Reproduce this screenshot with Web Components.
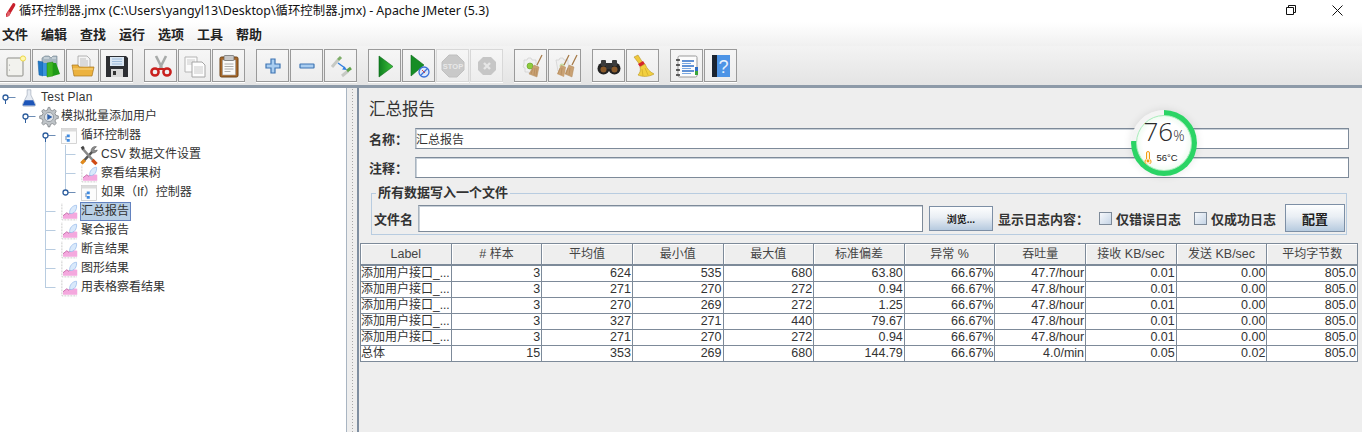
<!DOCTYPE html>
<html>
<head>
<meta charset="utf-8">
<title>JMeter</title>
<style>
  html, body { margin: 0; padding: 0; background: #eee; overflow: hidden; }
  body { width: 1362px; height: 432px; font-family: "Liberation Sans", "Noto Sans CJK SC", sans-serif; }
</style>
</head>
<body>
<jm-app></jm-app>

<script>
const CJK = '"Liberation Sans", "Noto Sans CJK SC", sans-serif';

///////////////////
// Icons, all on a 24 box
const ICONS = {
  new: `<rect x="4" y="4" width="16" height="18" rx="1" fill="#f2f2ee" stroke="#8d8d88"/><circle cx="6.500" cy="11" r=".6" fill="#999"/><circle cx="6.500" cy="16" r=".6" fill="#999"/><circle cx="20" cy="4.500" r="2.600" fill="#fff7b0" stroke="#ecd84a"/>`,
  templates: `<path d="M5 8V4l3-2h4l2 2 2-2h4v13H5z" fill="#a9b8c2" stroke="#6f828d" stroke-width=".6"/><path d="M7 4h5M15 4h4" stroke="#dfe6ea"/><path d="M1 7l5 1v14l-4-1z" fill="#1f78c8" stroke="#135a9c" stroke-width=".5"/><path d="M6 9h4v13H6z" fill="#3b93dc"/><path d="M10 9l6-1v14l-6 1z" fill="#3cb521" stroke="#23860f" stroke-width=".5"/><path d="M16 9h3l4 11-7 2z" fill="#1f9a18"/>`,
  open: `<path d="M7 13V2h9l3 3v9z" fill="#f5f5f5" stroke="#999" stroke-width=".7"/><path d="M9 5h6M9 7h8M9 9h8M9 11h8" stroke="#aaa" stroke-width=".7"/><path d="M1 11h6l1 2h15l-2 9H3z" fill="#ecb23e" stroke="#a9761c" stroke-width=".7"/><path d="M2 15h20" stroke="#f9d885"/>`,
  save: `<path d="M1 2h20l2 2v19H1z" fill="#2d2f33"/><rect x="5" y="3" width="14" height="9" fill="#dbe7f3"/><path d="M7 5h10M7 7.500h10M7 10h10" stroke="#8eb0d3" stroke-width=".8"/><rect x="6" y="15" width="12" height="8" fill="#d8d8d8"/><rect x="8" y="17" width="3" height="4" fill="#333"/>`,
  cut: `<path d="M7 2l6 12M17 2l-6 12" stroke="#a7aaa9" stroke-width="2.600" fill="none"/><circle cx="6" cy="18" r="3.600" fill="none" stroke="#c9201e" stroke-width="2.500"/><circle cx="18" cy="18" r="3.600" fill="none" stroke="#c9201e" stroke-width="2.500"/><path d="M9 15h6" stroke="#c9201e" stroke-width="2"/>`,
  copy: `<path d="M2 3h12v15H2z" fill="#fbfbfb" stroke="#b5b5b5"/><path d="M4 6h8M4 8h8M4 10h8" stroke="#ccc"/><path d="M9 8h10l3 3v12H9z" fill="#fdfdfd" stroke="#a5a5a5"/><path d="M11 13h9M11 15h9M11 17h9M11 19h9" stroke="#bdbdbd" stroke-width=".8"/>`,
  paste: `<rect x="3" y="3" width="18" height="20" rx="1.500" fill="#a8682a" stroke="#6d4317"/><rect x="5.500" y="6" width="13" height="15" fill="#fafafa" stroke="#999" stroke-width=".6"/><rect x="7" y="1.500" width="10" height="5" rx="1" fill="#c7c7c7" stroke="#666" stroke-width=".7"/><path d="M7.500 10h9M7.500 12.500h9M7.500 15h9M7.500 17.500h6" stroke="#999" stroke-width=".8"/>`,
  plus: `<path d="M10 5h4v5h5v4h-5v5h-4v-5H5v-4h5z" fill="#a9cdf0" stroke="#3e75b3" stroke-width="1.200"/>`,
  minus: `<rect x="5" y="10" width="14" height="4" rx=".5" fill="#a9cdf0" stroke="#3e75b3" stroke-width="1.200"/>`,
  toggle: `<path d="M3 13L9 6" stroke="#c6c9c4" stroke-width="3"/><path d="M9 6l3-3" stroke="#7fae6a" stroke-width="3"/><path d="M13 22l6-5" stroke="#c6c9c4" stroke-width="3"/><path d="M18 17l4-3" stroke="#5fa349" stroke-width="3"/><path d="M9 9l7 5" stroke="#2f7fe0" stroke-width="1.400"/><path d="M18 16l-5-.5 2.500-3z" fill="#2f7fe0"/>`,
  play: `<defs><linearGradient id="pg" x1="0" y1="0" x2="1" y2="0"><stop offset="0" stop-color="#0f7f1f"/><stop offset="1" stop-color="#3cc13c"/></linearGradient></defs><path d="M6 2l14 10.500L6 23z" fill="url(#pg)" stroke="#0c6a18" stroke-width=".6"/>`,
  playnt: `<path d="M4 1l13 10L4 22z" fill="#158d25" stroke="#0c6a18" stroke-width=".6"/><circle cx="17" cy="18" r="5" fill="#dbe8fb" stroke="#3a6fd8" stroke-width="1.300"/><path d="M14 21l6-6" stroke="#3a6fd8" stroke-width="1.300"/><path d="M15 16l3 3" stroke="#d33" stroke-width=".9"/>`,
  stop: `<path d="M8 1h8l7 7v8l-7 7H8l-7-7V8z" fill="#c9c9c9" stroke="#c0c0c0"/><text x="12" y="15" font-size="7.500" font-weight="700" text-anchor="middle" fill="#e8e8e8" font-family="Liberation Sans">STOP</text>`,
  shutdown: `<path d="M8 3h8l5 5v8l-5 5H8l-5-5V8z" fill="#c6c6c6"/><path d="M9 9l6 6M15 9l-6 6" stroke="#e6e6e6" stroke-width="2.400"/>`,
  clear: `<path d="M5 6h3l1-2h3l1 2h4v4l2 2-2 2v3h-3l-2 2-3-1H6v-4l-2-1 1-3z" fill="#f0f0f0" stroke="#cfcfcf" stroke-width=".7"/><circle cx="11" cy="12" r="3" fill="#8fcd3c" stroke="#5d9a22" stroke-width=".6"/><path d="M23 1l-5 10" stroke="#a67b4a" stroke-width="1.300"/><path d="M15 11l5 2-2 10-8-3z" fill="#c9a173" stroke="#a98150" stroke-width=".4"/><path d="M14 14l-2 6M16 14l-1 7M18 14l-1 8" stroke="#a98150" stroke-width=".5"/>`,
  clearall: `<path d="M3 6h3l1-2h3l1 2h4v4l1 2-1 2v3H5z" fill="#f0f0f0" stroke="#cfcfcf" stroke-width=".7"/><circle cx="9" cy="12" r="2.500" fill="#c9dfa6"/><path d="M16 1l-5 10M24 1l-5 10" stroke="#a67b4a" stroke-width="1.300"/><path d="M8 11l5 2-2 10-7-3z" fill="#c9a173"/><path d="M16 11l5 2-2 10-7-3z" fill="#c9a173" stroke="#a98150" stroke-width=".4"/><path d="M7 14l-2 6M9 14l-1 7M15 14l-2 6M17 14l-1 7" stroke="#a98150" stroke-width=".5"/>`,
  search: `<circle cx="6.500" cy="14.500" r="6" fill="#222"/><circle cx="17.500" cy="14.500" r="6" fill="#222"/><rect x="9" y="9" width="6" height="6" fill="#333"/><rect x="4" y="6" width="5" height="6" rx="1" fill="#3c3c3c"/><rect x="15" y="6" width="5" height="6" rx="1" fill="#3c3c3c"/><circle cx="6.500" cy="15.500" r="3" fill="#8a5a2a"/><circle cx="17.500" cy="15.500" r="3" fill="#8a5a2a"/>`,
  broom: `<path d="M3 3l4-2 5 8-3 2z" fill="#f0c83c" stroke="#a8861c" stroke-width=".5"/><path d="M7 10l5-3 2 3-5 3z" fill="#d4262a"/><path d="M9 13l5-3c2 5 5 8 9 10-5 3-12 3-16 1 2-2 3-5 2-8z" fill="#f2d03f" stroke="#b8951f" stroke-width=".6"/><path d="M11 15l1 7M14 14l3 7" stroke="#c7a324" stroke-width=".6"/>`,
  list: `<rect x="3" y="2" width="19" height="21" rx="1.500" fill="#fcfcfc" stroke="#9a9a9a"/><path d="M7 7h12M7 12h12M7 17h12" stroke="#2e6fc8" stroke-width="1.300"/><path d="M7 9.500h9M7 14.500h9M7 19.500h9" stroke="#6b9ede" stroke-width=".9"/><path d="M1 6h4M1 11h4M1 16h4M1 21h4" stroke="#333" stroke-width="1.400"/><rect x="20" y="13" width="3" height="4" fill="#2e6fc8"/><rect x="20" y="17" width="3" height="4" fill="#3aa63a"/>`,
  help: `<path d="M3 1h18v22H3z" fill="#4d94e6"/><rect x="3" y="1" width="5" height="22" fill="#1b2430"/><text x="14.500" y="19" font-size="18" text-anchor="middle" fill="#e9f2fd" font-family="Liberation Sans">?</text>`,
  flask: `<path d="M9.500 1h5v7l6 12c.5 1.500-.5 3-2 3H5.500c-1.500 0-2.500-1.500-2-3l6-12z" fill="#e6ebf2" stroke="#8c98a8" stroke-width=".7"/><path d="M6.500 15h11l3 7H3.500z" fill="#1d55b8"/>`,
  gear: `<path d="M11 .5h2l.8 3 2.300 1 2.700-1.600 2 2-1.600 2.700 1 2.300 3 .8v3l-3 .8-1 2.300 1.600 2.700-2 2-2.700-1.600-2.300 1-.8 3h-2l-.8-3-2.300-1-2.700 1.600-2-2 1.600-2.700-1-2.300-3-.8v-3l3-.8 1-2.300-1.600-2.700 2-2 2.700 1.600 2.300-1z" fill="#bfc4c8" stroke="#6f7479" stroke-width=".8"/><circle cx="12" cy="12" r="5.500" fill="#dfe3e8" stroke="#7d858c" stroke-width=".8"/><path d="M10 8.500l6 3.500-6 3.500z" fill="#2a5da8"/>`,
  logic: `<rect x="2" y="2" width="20" height="20" fill="#fcfcfc" stroke="#c8c8c8"/><rect x="2" y="2" width="20" height="4" fill="#dcdcdc"/><path d="M9 10h4v3.500H9zM9 16h4v3.500H9z" fill="#3f8ae0"/><path d="M8 12v5.500" stroke="#2f5f9e"/>`,
  wrench: `<path d="M3 22l13-14" stroke="#555" stroke-width="3"/><path d="M3 22l4-4" stroke="#e28a1c" stroke-width="4"/><path d="M15 9a5 5 0 0 1 6-7l-3 3 1 2 3-1a5 5 0 0 1-7 3z" fill="#8e8e8e" stroke="#444" stroke-width=".6"/><path d="M4 4l15 17" stroke="#8a8a8a" stroke-width="3"/><path d="M2 3l3-2 2 3-3 2z" fill="#444"/><path d="M16 18l5 5" stroke="#d04a14" stroke-width="4"/>`,
  graph: `<path d="M2.500 1v21.500H23" fill="none" stroke="#b4b4b4" stroke-dasharray="1 1" stroke-width="1.200"/><path d="M4 21v-4l5-4 3 2 3-3 8 1v8z" fill="#f4a8de"/><path d="M4 17l5-4 3 2 3-3" fill="none" stroke="#b0478f" stroke-width=".9"/><path d="M13 14C12 8 17 3 22 3c1 6-3 12-9 11z" fill="#d9e9fb" stroke="#8fb5e8" stroke-width=".9"/>`
};

function icon(name, size) {
  return `<svg width="${size}" height="${size}" viewBox="0 0 24 24" style="display:block;flex:none;overflow:visible">${ICONS[name]}</svg>`;
}

///////////////////
// Title bar
class JmTitlebar extends HTMLElement {
  constructor() {
    super();
    this.attachShadow({mode: 'open'});
    this.shadowRoot.innerHTML = `
      <style>
        :host { display: flex; align-items: center; height: 22px; padding-bottom: 2px; box-sizing: border-box; background: #fff; color: #111;
                font: 12.400px "Noto Sans", "Noto Sans CJK SC", sans-serif; white-space: nowrap; }
        svg { flex: none; }
        .name { margin-left: 1px; flex: 1; }
        .ctl { display: flex; align-items: center; justify-content: center; width: 46px; height: 20px; }
      </style>
      <svg width="14" height="16" viewBox="0 0 14 16" style="margin-left:4px"><path d="M9 1c2 0 3 1 2 3L5 14l-3 1 0-3z" fill="#c8202c"/><path d="M4 9l3 2-2 3-3 1z" fill="#e0606a"/></svg>
      <span class="name"><slot></slot></span>
      <span class="ctl"><svg width="10" height="10" viewBox="0 0 10 10"><path d="M.5 2.500h7v7h-7z M2.500 2.500v-2h7v7h-2" fill="none" stroke="#111"/></svg></span>
      <span class="ctl"><svg width="11" height="11" viewBox="0 0 11 11"><path d="M.5.500l10 10M10.500.500l-10 10" stroke="#111" fill="none"/></svg></span>
      <span style="width:2px"></span>`;
  }
}
customElements.define('jm-titlebar', JmTitlebar);

///////////////////
// Menu bar
class JmMenubar extends HTMLElement {
  constructor() {
    super();
    this.attachShadow({mode: 'open'});
    this.shadowRoot.innerHTML = `
      <style>
        :host { display: flex; align-items: center; gap: 13px; height: 24px; padding: 0 0 2px 2px; box-sizing: border-box;
                background: linear-gradient(#fff, #f0f0f0); font: 700 13px ${CJK}; color: #222; }
      </style>
      ${['文件','编辑','查找','运行','选项','工具','帮助'].map(t => `<span>${t}</span>`).join('')}`;
  }
}
customElements.define('jm-menubar', JmMenubar);

///////////////////
// Toolbar
class JmToolbar extends HTMLElement {
  constructor() {
    super();
    this.attachShadow({mode: 'open'});
    const groups = [
      ['new','templates','open','save'],
      ['cut','copy','paste'],
      ['plus','minus','toggle'],
      ['play','playnt','stop','shutdown'],
      ['clear','clearall'],
      ['search','broom'],
      ['list','help']
    ];
    const off = ['stop','shutdown'];
    this.shadowRoot.innerHTML = `
      <style>
        :host { display: flex; gap: 11px; height: 39px; padding: 3px 0 0 0; box-sizing: border-box;
                background: linear-gradient(#f3f3f3, #e4e4e4); overflow: hidden; }
        .group { display: flex; gap: 1px; }
        .group:first-of-type { margin-left: -2px; }
        .btn { width: 31px; height: 31px; border: 1px solid #9a9a9a; box-shadow: 0 1px 0 #fff;
               background: linear-gradient(#f6f6f6, #ededed);
               display: flex; align-items: center; justify-content: center; }
        .btn.off { border-color: #d8d8d8; }
      </style>
      ${groups.map(g => `<div class="group">${g.map(n =>
        `<div class="btn ${off.includes(n) ? 'off' : ''}">${icon(n, 24)}</div>`).join('')}</div>`).join('')}`;
  }
}
customElements.define('jm-toolbar', JmToolbar);

///////////////////
// One row of the tree; the gutter draws its own connector lines
class JmTreeRow extends HTMLElement {
  constructor() {
    super();
    this.attachShadow({mode: 'open'});
    const level = +this.getAttribute('level');
    const w = 20 * level + 20;
    const verts = (this.getAttribute('verts') || '').split(',').filter(Boolean).map(v => v.split(':'));
    const hx = 20 * level + 5.5;
    let g = verts.map(([x, a, b]) => `<path d="M${x} ${a}V${b}" stroke="#b8cce0"/>`).join('');
    if (this.hasAttribute('handle')) {
      g += `<path d="M${hx} 9.500H${hx + 10}" stroke="#6d8db5"/><circle cx="${hx}" cy="9.500" r="2.500" fill="#fff" stroke="#2f5f9e" stroke-width="1.300"/>`;
      if (!this.hasAttribute('closed')) g += `<path d="M${hx} 12v4" stroke="#2f5f9e"/>`;
    } else {
      g += `<path d="M${hx} 9.500H${hx + 10}" stroke="#b8cce0"/>`;
    }
    const ico = this.getAttribute('icon');
    const size = ico === 'gear' || ico === 'wrench' ? 20 : 18;
    this.shadowRoot.innerHTML = `
      <style>
        :host { display: flex; align-items: center; height: 19px; font: 12px ${CJK}; color: #333; white-space: nowrap; }
        svg.gut { flex: none; display: block; }
        .ico { width: 18px; height: 18px; flex: none; display: flex; align-items: center; justify-content: center; }
        .label { padding: 0 1px 0 0; line-height: 17px; border: 1px solid transparent; margin-left: 2px; }
        :host([selected]) .label { background: #b8cfe5; border-color: #6382bf; }
      </style>
      <svg class="gut" width="${w}" height="19" viewBox="0 0 ${w} 19">${g}</svg>
      <span class="ico">${icon(ico, size)}</span>
      <span class="label"><slot></slot></span>`;
  }
}
customElements.define('jm-tree-row', JmTreeRow);

///////////////////
// Left tree panel
class JmTree extends HTMLElement {
  constructor() {
    super();
    this.attachShadow({mode: 'open'});
    this.shadowRoot.innerHTML = `
      <style>
        :host { display: block; width: 346px; flex: none; background: #fff; box-sizing: border-box; }
      </style>
      <slot></slot>`;
  }
}
customElements.define('jm-tree', JmTree);

///////////////////
// Dotted splitter between the tree and the report
class JmSplitter extends HTMLElement {
  constructor() {
    super();
    this.attachShadow({mode: 'open'});
    this.shadowRoot.innerHTML = `
      <style>
        :host { display: flex; width: 13px; flex: none; background: #eee; box-sizing: border-box;
                border-left: 1px solid #a9b5c2; border-right: 2px solid #7f8ea0; justify-content: center; }
        i { width: 3px; background-image: radial-gradient(#a8a8a8 .8px, transparent 1px);
            background-size: 3px 3px; }
      </style>
      <i></i>`;
  }
}
customElements.define('jm-splitter', JmSplitter);

///////////////////
// Text field
class JmField extends HTMLElement {
  constructor() {
    super();
    this.attachShadow({mode: 'open'});
    this.shadowRoot.innerHTML = `
      <style>
        :host { display: block; flex: 1; align-self: stretch; box-sizing: border-box; background: #fff;
                border: 1px solid #7d8a99; border-left-color: #a9b4bf; box-shadow: inset 1px 1px 0 #c8d0d8;
                font: 400 12px ${CJK}; color: #333; line-height: 22px; white-space: nowrap; }
      </style>
      <slot></slot>`;
  }
}
customElements.define('jm-field', JmField);

///////////////////
// Gradient button
class JmButton extends HTMLElement {
  constructor() {
    super();
    this.attachShadow({mode: 'open'});
    this.shadowRoot.innerHTML = `
      <style>
        :host { display: flex; align-items: center; justify-content: center; flex: none; box-sizing: border-box;
                border: 1px solid #7d8fa5; background: linear-gradient(#fdfefe, #e9eef4 45%, #b6cadf);
                font: 700 13px ${CJK}; color: #222; }
      </style>
      <slot></slot>`;
  }
}
customElements.define('jm-button', JmButton);

///////////////////
// Checkbox with label
class JmCheck extends HTMLElement {
  constructor() {
    super();
    this.attachShadow({mode: 'open'});
    this.shadowRoot.innerHTML = `
      <style>
        :host { display: flex; align-items: center; gap: 4px; font: 700 13px ${CJK}; color: #333; white-space: nowrap; }
        i { width: 11px; height: 11px; border: 1px solid #7d8a99; background: linear-gradient(135deg, #f6f8fb, #c6d5e6); }
      </style>
      <i></i><slot></slot>`;
  }
}
customElements.define('jm-check', JmCheck);

///////////////////
// Titled group box
class JmGroup extends HTMLElement {
  constructor() {
    super();
    this.attachShadow({mode: 'open'});
    this.shadowRoot.innerHTML = `
      <style>
        :host { display: block; margin: 8px 15px 0 12px; }
        fieldset { margin: 0; padding: 0 1px 2px 2px; height: 49px; box-sizing: border-box; border: 1px solid #b8cce0; }
        legend { padding: 0 2px; margin-left: 2px; font: 700 13px/14px ${CJK}; color: #333; }
        .row { display: flex; align-items: center; height: 28px; margin-top: 4px; }
      </style>
      <fieldset><legend>${this.getAttribute('title')}</legend><div class="row"><slot></slot></div></fieldset>`;
  }
}
customElements.define('jm-group', JmGroup);

///////////////////
// Results table
class JmTable extends HTMLElement {
  constructor() {
    super();
    this.attachShadow({mode: 'open'});
    const head = ['Label','# 样本','平均值','最小值','最大值','标准偏差','异常 %','吞吐量','接收 KB/sec','发送 KB/sec','平均字节数'];
    const L = '添加用户接口_...';
    const rows = [
      [L,'3','624','535','680','63.80','66.67%','47.7/hour','0.01','0.00','805.0'],
      [L,'3','271','270','272','0.94','66.67%','47.8/hour','0.01','0.00','805.0'],
      [L,'3','270','269','272','1.25','66.67%','47.8/hour','0.01','0.00','805.0'],
      [L,'3','327','271','440','79.67','66.67%','47.8/hour','0.01','0.00','805.0'],
      [L,'3','271','270','272','0.94','66.67%','47.8/hour','0.01','0.00','805.0'],
      ['总体','15','353','269','680','144.79','66.67%','4.0/min','0.05','0.02','805.0']
    ];
    // chinese runs are a touch smaller than the latin around them
    const zh = t => t.replace(/[\u4e00-\u9fff]+/g, m => `<span class="z">${m}</span>`);
    this.shadowRoot.innerHTML = `
      <style>
        :host { display: grid; grid-template-columns: repeat(11, 1fr); width: 998px; margin: 8px 0 0 1px; box-sizing: border-box;
                border: solid #7d8a99; border-width: 1px 0 0 1px; font: 400 12.500px ${CJK}; color: #333; }
        div { box-sizing: border-box; border: solid #7d8a99; border-width: 0 1px 1px 0; white-space: nowrap; overflow: hidden; }
        .z { font-size: 12px; }
        .h { height: 22px; line-height: 20px; text-align: center; background: #eee; color: #444; border-width: 0 1px 2px 0; box-shadow: inset 1px 1px 0 #fff; }
        .c { height: 16px; line-height: 15px; text-align: right; padding-right: 1px; background: #fff; }
        .c.l { text-align: left; padding: 0; font-size: 12px; }
      </style>
      ${head.map(t => `<div class="h">${zh(t)}</div>`).join('')}
      ${rows.map(r => r.map((t, i) => `<div class="c ${i ? '' : 'l'}">${zh(t)}</div>`).join('')).join('')}`;
  }
}
customElements.define('jm-table', JmTable);

///////////////////
// CPU gauge floating over the window
class JmGauge extends HTMLElement {
  constructor() {
    super();
    this.attachShadow({mode: 'open'});
    this.shadowRoot.innerHTML = `
      <style>
        :host { position: absolute; left: 1131px; top: 110px; width: 66px; height: 66px; border-radius: 50%;
                background: conic-gradient(#2bd465 0 76%, #f4f4f4 76% 100%); display: flex; align-items: center; justify-content: center;
                box-shadow: 0 0 8px rgba(0,0,0,.1); }
        .in { width: 56px; height: 56px; border-radius: 50%; background: radial-gradient(#fff 55%, #d6f5dc); box-sizing: border-box;
              border: 1px solid #a8edbb;
              display: flex; flex-direction: column; align-items: center; font-family: "Open Sans", sans-serif; color: #2a2a2a; }
        .num { font-size: 26px; line-height: 29px; margin-top: 1px; font-weight: 300; }
        .num small { font-size: 14px; }
        .t { display: flex; align-items: center; gap: 4px; padding-right: 6px; font: 9.500px/11px "Liberation Sans", sans-serif; color: #222; margin-top: 1px; }
      </style>
      <div class="in">
        <div class="num">76<small>%</small></div>
        <div class="t"><svg width="8" height="13" viewBox="0 0 8 13"><path d="M2.500 2a1.500 1.500 0 0 1 3 0v6a3 3 0 1 1-3 0z" fill="#fff3d8" stroke="#f39c12"/><circle cx="4" cy="10" r="1.400" fill="#f39c12"/></svg>56°C</div>
      </div>`;
  }
}
customElements.define('jm-gauge', JmGauge);

///////////////////
// Report panel
class JmReport extends HTMLElement {
  constructor() {
    super();
    this.attachShadow({mode: 'open'});
    this.shadowRoot.innerHTML = `
      <style>
        :host { display: block; flex: 1; background: #eee; font: 700 13px ${CJK}; color: #333; }
        h1 { margin: 0; padding: 10px 0 0 10px; height: 40px; box-sizing: border-box; font: 400 16.500px/22px ${CJK}; color: #333; }
        .f { display: flex; align-items: center; height: 21px; margin: 0 13px 0 10px; }
        .f span { width: 46px; flex: none; }
        .f + .f { margin-top: 8px; }
        .browse { width: 64px; height: 25px; font-size: 10px; margin: 0 5px 0 6px; }
        .cfg { width: 60px; height: 28px; margin-left: 9px; }
        jm-check.a { margin-left: 10px; }
        jm-check.b { margin-left: 13px; }
        .fname { width: 44px; flex: none; }
        jm-field.file { height: 27px; align-self: center; }
      </style>
      <h1>汇总报告</h1>
      <div class="f"><span>名称：</span><jm-field>汇总报告</jm-field></div>
      <div class="f"><span>注释：</span><jm-field></jm-field></div>
      <jm-group title="所有数据写入一个文件">
        <span class="fname">文件名</span>
        <jm-field class="file"></jm-field>
        <jm-button class="browse">浏览...</jm-button>
        <span>显示日志内容：</span>
        <jm-check class="a">仅错误日志</jm-check>
        <jm-check class="b">仅成功日志</jm-check>
        <jm-button class="cfg">配置</jm-button>
      </jm-group>
      <jm-table></jm-table>`;
  }
}
customElements.define('jm-report', JmReport);

///////////////////
// Whole window
class JmApp extends HTMLElement {
  constructor() {
    super();
    this.attachShadow({mode: 'open'});
    this.shadowRoot.innerHTML = `
      <style>
        :host { display: flex; flex-direction: column; width: 1362px; height: 432px; overflow: hidden; position: relative; }
        .main { display: flex; flex: 1; min-height: 0; border-top: 3px solid #8d9aa8; }
        .tp { letter-spacing: .25px; }
      </style>
      <jm-titlebar>循环控制器.jmx (C:\\Users\\yangyl13\\Desktop\\循环控制器.jmx) - Apache JMeter (5.3)</jm-titlebar>
      <jm-menubar></jm-menubar>
      <jm-toolbar></jm-toolbar>
      <div class="main">
        <jm-tree>
          <jm-tree-row class="tp" level="0" icon="flask" handle>Test Plan</jm-tree-row>
          <jm-tree-row level="1" icon="gear" handle>模拟批量添加用户</jm-tree-row>
          <jm-tree-row level="2" icon="logic" handle verts="45.5:14:19">循环控制器</jm-tree-row>
          <jm-tree-row level="3" icon="wrench" verts="45.5:0:19,65.5:0:19">CSV 数据文件设置</jm-tree-row>
          <jm-tree-row level="3" icon="graph" verts="45.5:0:19,65.5:0:19">察看结果树</jm-tree-row>
          <jm-tree-row level="3" icon="logic" handle closed verts="45.5:0:19,65.5:0:7">如果（If）控制器</jm-tree-row>
          <jm-tree-row level="2" icon="graph" selected verts="45.5:0:19">汇总报告</jm-tree-row>
          <jm-tree-row level="2" icon="graph" verts="45.5:0:19">聚合报告</jm-tree-row>
          <jm-tree-row level="2" icon="graph" verts="45.5:0:19">断言结果</jm-tree-row>
          <jm-tree-row level="2" icon="graph" verts="45.5:0:19">图形结果</jm-tree-row>
          <jm-tree-row level="2" icon="graph" verts="45.5:0:10">用表格察看结果</jm-tree-row>
        </jm-tree>
        <jm-splitter></jm-splitter>
        <jm-report></jm-report>
      </div>
      <jm-gauge></jm-gauge>`;
  }
}
customElements.define('jm-app', JmApp);
</script>
</body>
</html>
